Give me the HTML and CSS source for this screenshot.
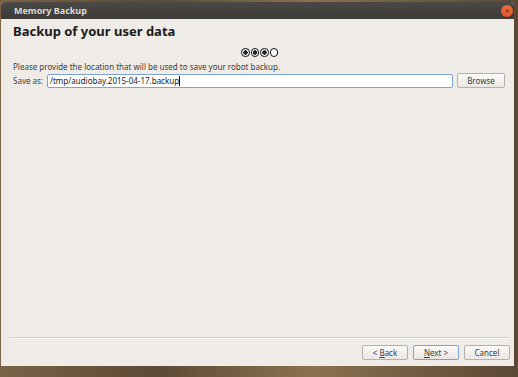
FILE: index.html
```html
<!DOCTYPE html>
<html lang="en">
<head>
  <meta charset="UTF-8">
  <title>Memory Backup</title>
  <link rel="stylesheet" href="styles.css">
</head>
<body>

  <div class="window">
    <div class="titlebar">
      <span class="title">Memory Backup</span>
      <span class="close">&#215;</span>
    </div>

    <div class="content">
      <div class="heading">Backup of your user data</div>

      <div class="steps">
        <span class="dot done"></span>
        <span class="dot done"></span>
        <span class="dot done"></span>
        <span class="dot"></span>
      </div>

      <div class="hint">Please provide the location that will be used to save your robot backup.</div>

      <div class="save-row">
        <label class="save-label">Save as:</label>
        <div class="path-input">/tmp/audiobay.2015-04-17.backup<span class="caret"></span></div>
        <button class="btn browse">Browse</button>
      </div>

      <div class="spacer"></div>

      <div class="separator"></div>

      <div class="btns">
        <button class="btn">&lt; <u>B</u>ack</button>
        <button class="btn btn-default"><u>N</u>ext &gt;</button>
        <button class="btn">Cancel</button>
      </div>
    </div>
  </div>

</body>
</html>
```

FILE: styles.css
```css
* {
  box-sizing: border-box;
  font-family: 'Noto Sans', 'DejaVu Sans', sans-serif;
}

body {
  margin: 0;
  width: 518px;
  height: 377px;
  background: linear-gradient(to right, #7a6346, #5d4a35 30%, #8a7150 60%, #5b4834);
  overflow: hidden;
}

.window {
  margin: 2px 4px 0 1px;
  height: 364px;
  display: flex;
  flex-direction: column;
  background: #efebe7;
  border-radius: 4px 4px 0 0;
  overflow: hidden;
}

.titlebar {
  height: 17px;
  background: linear-gradient(to bottom, #4a4945, #3c3b37);
  display: flex;
  align-items: center;
  justify-content: space-between;
  padding: 0 1px 0 13px;
  color: #dfdbd2;
  font-size: 9px;
  font-weight: bold;
}

.close {
  width: 12px;
  height: 12px;
  border-radius: 50%;
  background: radial-gradient(circle at 50% 35%, #f47a4a, #d9481c);
  color: #8a2a0c;
  font-size: 9px;
  line-height: 12px;
  text-align: center;
}

.content {
  flex: 1;
  display: flex;
  flex-direction: column;
  padding: 2px 4px 6px 12px;
  color: #3c3c3c;
  font-size: 8px;
}

.heading {
  font-size: 13px;
  font-weight: bold;
  color: #1a1a1a;
  height: 20px;
  line-height: 20px;
}

.steps {
  display: flex;
  justify-content: center;
  gap: 1px;
  margin: 7px 0 0 -4px;
  height: 9px;
}

.dot {
  width: 8.5px;
  height: 8.5px;
  border-radius: 50%;
  border: 1.5px solid #111;
  background: #fff;
}

.dot.done {
  background: radial-gradient(circle, #222 0 2px, #fff 2.4px);
}

.hint {
  margin-top: 4px;
  line-height: 11px;
}

.save-row {
  display: flex;
  align-items: center;
  gap: 4px;
  margin-top: 1px;
  height: 15px;
}

.save-label {
  width: 30px;
}

.path-input {
  flex: 1;
  height: 14px;
  line-height: 12px;
  padding: 0 2px;
  background: #fff;
  border: 1px solid #7ba3d4;
  border-radius: 2px;
  color: #222;
}

.caret {
  display: inline-block;
  width: 1px;
  height: 10px;
  background: #000;
  vertical-align: middle;
}

.btn {
  height: 15px;
  padding: 0;
  font-size: 8px;
  color: #3c3c3c;
  background: linear-gradient(to bottom, #fbfaf9, #eae7e3);
  border: 1px solid #b6b1aa;
  border-radius: 2px;
}

.browse {
  width: 48px;
  margin-right: 5px;
}

.spacer {
  flex: 1;
}

.separator {
  height: 2px;
  margin: 0 0 6px -4px;
  border-top: 1px solid #d4cfca;
  border-bottom: 1px solid #faf8f6;
}

.btns {
  display: flex;
  justify-content: flex-end;
  gap: 5px;
}

.btns .btn {
  width: 46px;
}

.btn-default {
  border-color: #7ba3d4;
}
```
